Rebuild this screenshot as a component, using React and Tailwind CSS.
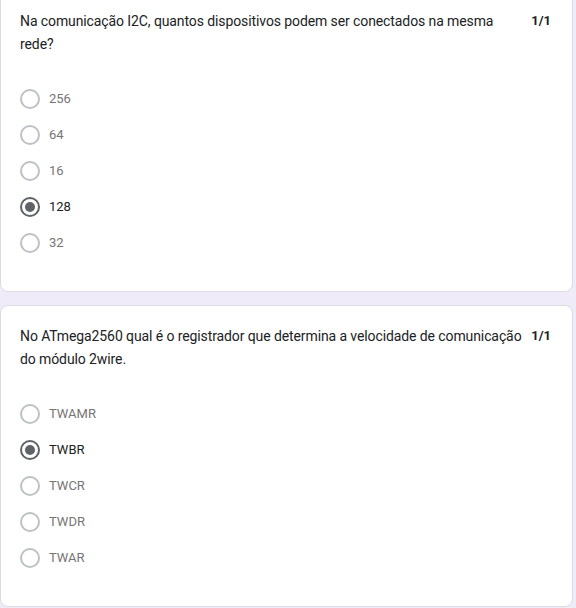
import React from 'react';

const questions = [
  {
    title: 'Na comunicação I2C, quantos dispositivos podem ser conectados na mesma rede?',
    score: '1/1',
    options: ['256', '64', '16', '128', '32'],
    selected: '128',
  },
  {
    title: 'No ATmega2560 qual é o registrador que determina a velocidade de comunicação do módulo 2wire.',
    score: '1/1',
    options: ['TWAMR', 'TWBR', 'TWCR', 'TWDR', 'TWAR'],
    selected: 'TWBR',
  },
];

function Radio({ checked }) {
  return (
    <span
      className={`flex items-center justify-center w-[20px] h-[20px] rounded-full border-2 shrink-0 ${
        checked ? 'border-[#5f6368]' : 'border-[#bdc1c6]'
      }`}
    >
      {checked && <span className="w-[10px] h-[10px] rounded-full bg-[#5f6368]" />}
    </span>
  );
}

function QuestionCard({ q, className }) {
  return (
    <div
      className={`bg-white rounded-lg border border-[#dadce0] w-[573px] pl-[19px] pr-[21px] pt-[19px] pb-[30px] ${className}`}
    >
      {/* Question + score */}
      <div className="flex items-start">
        <p className="flex-1 text-[14px] leading-[23px] text-[#202124] tracking-[-0.1px]">{q.title}</p>
        <span className="ml-[8px] shrink-0 text-[13px] leading-[22px] font-bold text-[#202124]">{q.score}</span>
      </div>

      {/* Options */}
      <div className="mt-[25px] flex flex-col">
        {q.options.map((opt) => {
          const checked = opt === q.selected;
          return (
            <div key={opt} className="flex items-center h-9 gap-[9px]">
              <Radio checked={checked} />
              <span className={`text-[13px] ${checked ? 'text-[#202124]' : 'text-[#757575]'}`}>{opt}</span>
            </div>
          );
        })}
      </div>
    </div>
  );
}

export default function App() {
  return (
    <div className="min-h-screen bg-[#f0ebf8] overflow-hidden" style={{ fontFamily: 'Roboto, "Noto Sans", sans-serif' }}>
      <QuestionCard q={questions[0]} className="-mt-[10px]" />
      <QuestionCard q={questions[1]} className="mt-[13px]" />
    </div>
  );
}
